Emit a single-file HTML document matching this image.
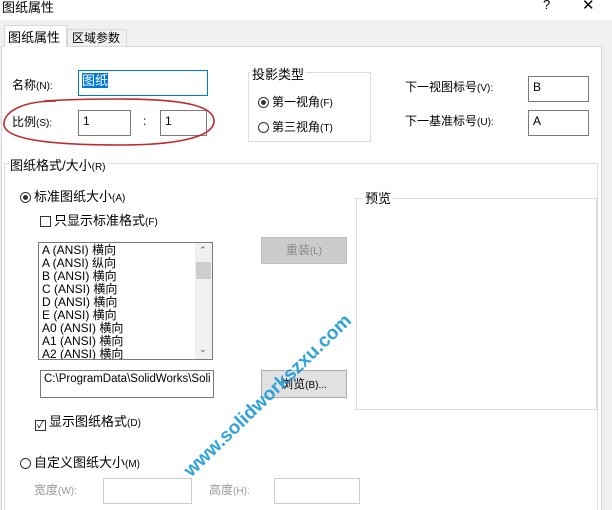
<!DOCTYPE html><html><head><meta charset="utf-8"><style>
html{overflow:hidden;width:612px;height:510px}
body{margin:0;width:612px;height:510px;background:#fff;position:relative;overflow:hidden;font-family:"Liberation Sans","Noto Sans CJK SC",sans-serif;font-size:12px;color:#000}
.a{position:absolute;white-space:nowrap}
.s{font-size:10px}
.box{position:absolute;border:1px solid #7a7a7a;background:#fff;box-sizing:border-box}
.g{position:absolute;border:1px solid #dcdcdc;box-sizing:border-box}
.rad{display:inline-block;width:11px;height:11px;border:1px solid #333;border-radius:50%;vertical-align:-2px;margin-right:3px;box-sizing:border-box;position:relative}
.rad.on:after{content:"";position:absolute;left:2px;top:2px;width:5px;height:5px;border-radius:50%;background:#333}
.chk{display:inline-block;width:11px;height:11px;border:1px solid #333;vertical-align:-2px;margin-right:3px;box-sizing:border-box;font-size:10px;line-height:9px;text-align:center}
.btn{position:absolute;background:#e1e1e1;border:1px solid #adadad;box-sizing:border-box;text-align:center}
</style></head><body>
<div class="a" style="left:2px;top:-3px;font-size:13px">图纸属性</div>
<div class="a" style="left:543px;top:-3px;font-size:13px">?</div>
<div class="a" style="left:582px;top:-4px;font-size:15px">✕</div>
<div style="position:absolute;left:0;top:20px;width:612px;height:490px;background:#f0f0f0"></div>
<div style="position:absolute;left:1px;top:46px;width:601px;height:464px;background:#fff;border:1px solid #d9d9d9;border-bottom:none;box-sizing:border-box"></div>
<div style="position:absolute;left:4px;top:25px;width:63px;height:22px;background:#fff;border:1px solid #d9d9d9;border-bottom:none;box-sizing:border-box"></div>
<div class="a" style="left:8px;top:27px;font-size:13px">图纸属性</div>
<div style="position:absolute;left:67px;top:29px;width:60px;height:17px;background:#f0f0f0;border:1px solid #d9d9d9;border-bottom:none;box-sizing:border-box"></div>
<div class="a" style="left:72px;top:29px;font-size:12px">区域参数</div>

<div class="a" style="left:12px;top:76px">名称<span class="s">(N):</span></div>
<div class="box" style="left:78px;top:70px;width:130px;height:26px;border-color:#0078d7"><span style="position:absolute;left:3px;top:2px;background:#0078d7;color:#fff;font-size:13px;line-height:15px">图纸</span></div>
<div class="a" style="left:12px;top:113px">比例<span class="s">(S):</span></div>
<div class="box" style="left:78px;top:110px;width:53px;height:26px"><span class="a" style="left:4px;top:3px">1</span></div>
<div class="a" style="left:143px;top:114px">:</div>
<div class="box" style="left:160px;top:110px;width:47px;height:26px"><span class="a" style="left:4px;top:3px">1</span></div>
<svg style="position:absolute;left:0;top:95px" width="225" height="55"><path d="M56 6 C20 6 3 18 4 30 C6 46 60 50 120 50 C185 50 214 40 214 26 C214 10 180 4 120 4 C90 4 60 5 44 6" fill="none" stroke="#c0282d" stroke-width="1.6"/></svg>

<div class="g" style="left:248px;top:72px;width:123px;height:70px"></div>
<div class="a" style="left:250px;top:64px;background:#fff;padding:0 2px;font-size:13px">投影类型</div>
<div class="a" style="left:258px;top:93px"><span class="rad on"></span>第一视角<span class="s">(F)</span></div>
<div class="a" style="left:258px;top:118px"><span class="rad"></span>第三视角<span class="s">(T)</span></div>

<div class="a" style="left:405px;top:78px">下一视图标号<span class="s">(V):</span></div>
<div class="box" style="left:528px;top:76px;width:61px;height:26px"><span class="a" style="left:4px;top:3px">B</span></div>
<div class="a" style="left:405px;top:112px">下一基准标号<span class="s">(U):</span></div>
<div class="box" style="left:528px;top:110px;width:61px;height:26px"><span class="a" style="left:4px;top:3px">A</span></div>

<div class="g" style="left:4px;top:163px;width:594px;height:347px;border-bottom:none"></div>
<div class="a" style="left:8px;top:155px;background:#fff;padding:0 2px;font-size:13px">图纸格式/大小<span class="s">(R)</span></div>
<div class="a" style="left:20px;top:186px;font-size:13px"><span class="rad on"></span>标准图纸大小<span class="s">(A)</span></div>
<div class="a" style="left:40px;top:210px;font-size:13px"><span class="chk"></span>只显示标准格式<span class="s">(F)</span></div>

<div class="box" style="left:38px;top:242px;width:175px;height:118px;overflow:hidden;line-height:13px">
<div style="padding:1px 3px">A (ANSI) 横向<br>A (ANSI) 纵向<br>B (ANSI) 横向<br>C (ANSI) 横向<br>D (ANSI) 横向<br>E (ANSI) 横向<br>A0 (ANSI) 横向<br>A1 (ANSI) 横向<br>A2 (ANSI) 横向</div>
<div style="position:absolute;right:0;top:0;width:17px;height:116px;background:#f0f0f0"><div style="position:absolute;left:1px;top:19px;width:15px;height:17px;background:#cdcdcd"></div><div class="a" style="left:4px;top:1px;font-size:9px;color:#555">⌃</div><div class="a" style="left:4px;top:100px;font-size:9px;color:#555">⌄</div></div>
</div>
<div class="btn" style="left:261px;top:237px;width:86px;height:27px;background:#cccccc;border-color:#bfbfbf;color:#888;line-height:25px">重装<span class="s">(L)</span></div>
<div class="box" style="left:40px;top:370px;width:174px;height:28px"><span class="a" style="left:3px;top:2px;font-size:11.5px">C:\ProgramData\SolidWorks\Soli</span></div>
<div class="btn" style="left:261px;top:370px;width:86px;height:28px;line-height:26px">浏览<span class="s">(B)...</span></div>
<div class="g" style="left:356px;top:198px;width:241px;height:212px"></div>
<div class="a" style="left:363px;top:188px;background:#fff;padding:0 2px;font-size:13px">预览</div>
<div class="a" style="left:35px;top:411px;font-size:13px"><span class="chk">✓</span>显示图纸格式<span class="s">(D)</span></div>
<div class="a" style="left:20px;top:452px;font-size:13px"><span class="rad"></span>自定义图纸大小<span class="s">(M)</span></div>
<div class="a" style="left:34px;top:481px;color:#999">宽度<span class="s">(W):</span></div>
<div class="box" style="left:103px;top:478px;width:89px;height:26px;border-color:#ccc"></div>
<div class="a" style="left:209px;top:481px;color:#999">高度<span class="s">(H):</span></div>
<div class="box" style="left:274px;top:478px;width:86px;height:26px;border-color:#ccc"></div>
<div class="a" style="left:180px;top:466px;transform:rotate(-44deg);transform-origin:0 0;color:#1a9ad6;font-weight:bold;font-size:19px;opacity:.9">www.solidworkszxu.com</div>
</body></html>
